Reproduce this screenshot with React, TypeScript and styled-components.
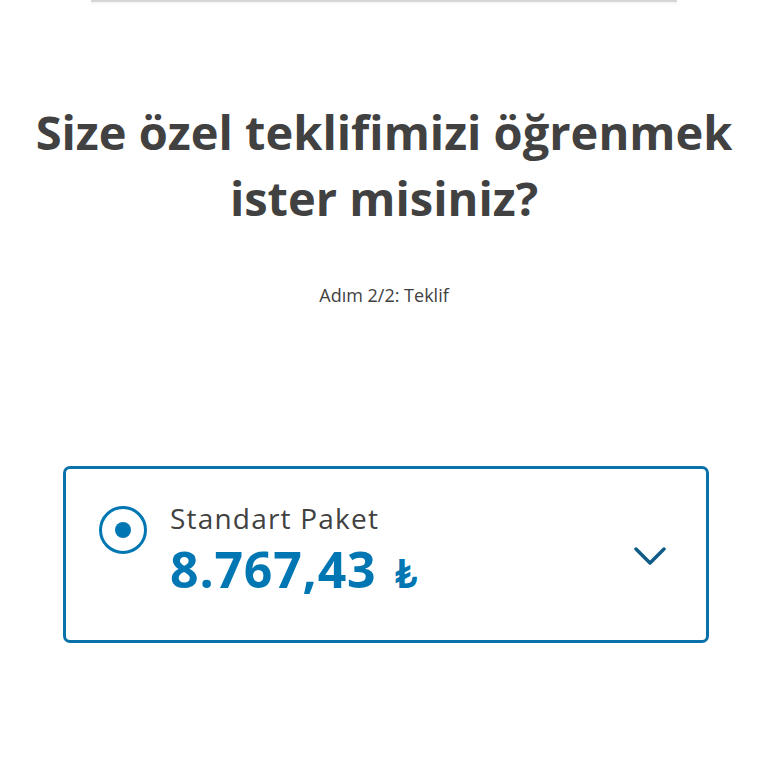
import styled, { createGlobalStyle } from "styled-components";

const GlobalStyle = createGlobalStyle`
  html, body {
    margin: 0;
    padding: 0;
    background: #ffffff;
  }
  body {
    font-family: "Open Sans", Lato, "Noto Sans", sans-serif;
    color: #414141;
  }
`;

export default function App() {
  return (
    <>
      <GlobalStyle />
      <Page>
        <TopEdge />
        <Title>
          Size özel teklifimizi öğrenmek
          <br />
          ister misiniz?
        </Title>
        <Step>Adım 2/2: Teklif</Step>
        <OfferCard>
          <Radio>
            <RadioDot />
          </Radio>
          <OfferText>
            <OfferName>Standart Paket</OfferName>
            <OfferPrice>
              8.767,43 <Currency>₺</Currency>
            </OfferPrice>
          </OfferText>
          <Chevron viewBox="0 0 32 20" aria-hidden>
            <path d="M2 2 L16 16 L30 2" />
          </Chevron>
        </OfferCard>
      </Page>
    </>
  );
}

const Page = styled.main`
  display: flex;
  flex-direction: column;
  align-items: center;
  width: 768px;
  min-height: 768px;
`;

const TopEdge = styled.div`
  width: 586px;
  height: 2px;
  background: #d6d6d6;
  box-shadow: 0 1px 3px rgba(0, 0, 0, 0.08);
`;

const Title = styled.h1`
  margin: 97px 0 0;
  font-size: 47px;
  font-weight: 700;
  line-height: 66px;
  text-align: center;
  color: #414141;
`;

const Step = styled.p`
  margin: 54px 0 0;
  font-size: 18px;
  line-height: 20px;
  color: #414141;
`;

const OfferCard = styled.section`
  box-sizing: border-box;
  display: flex;
  align-items: flex-start;
  width: 646px;
  height: 177px;
  margin: 161px 0 0 4px;
  padding: 0 40px 0 33px;
  border: 3px solid #0a72a8;
  border-radius: 7px;
`;

const Radio = styled.div`
  box-sizing: border-box;
  display: flex;
  align-items: center;
  justify-content: center;
  width: 48px;
  height: 48px;
  margin-top: 37px;
  border: 3.5px solid #0077b3;
  border-radius: 50%;
`;

const RadioDot = styled.span`
  width: 16px;
  height: 16px;
  border-radius: 50%;
  background: #0077b3;
`;

const OfferText = styled.div`
  display: flex;
  flex-direction: column;
  flex: 1;
  margin: 31px 0 0 23px;
`;

const OfferName = styled.span`
  font-size: 28px;
  line-height: 36px;
  font-weight: 500;
  letter-spacing: 1.2px;
  color: #414141;
`;

const OfferPrice = styled.span`
  margin-top: 2px;
  font-size: 50px;
  line-height: 62px;
  font-weight: 700;
  letter-spacing: 0.8px;
  color: #0077b3;
`;

const Currency = styled.span`
  margin-left: 4px;
  font-size: 40px;
`;

const Chevron = styled.svg`
  align-self: center;
  width: 32px;
  height: 20px;
  margin-top: 4px;
  fill: none;
  stroke: #105c86;
  stroke-width: 3.5;
  stroke-linecap: round;
  stroke-linejoin: round;
`;
